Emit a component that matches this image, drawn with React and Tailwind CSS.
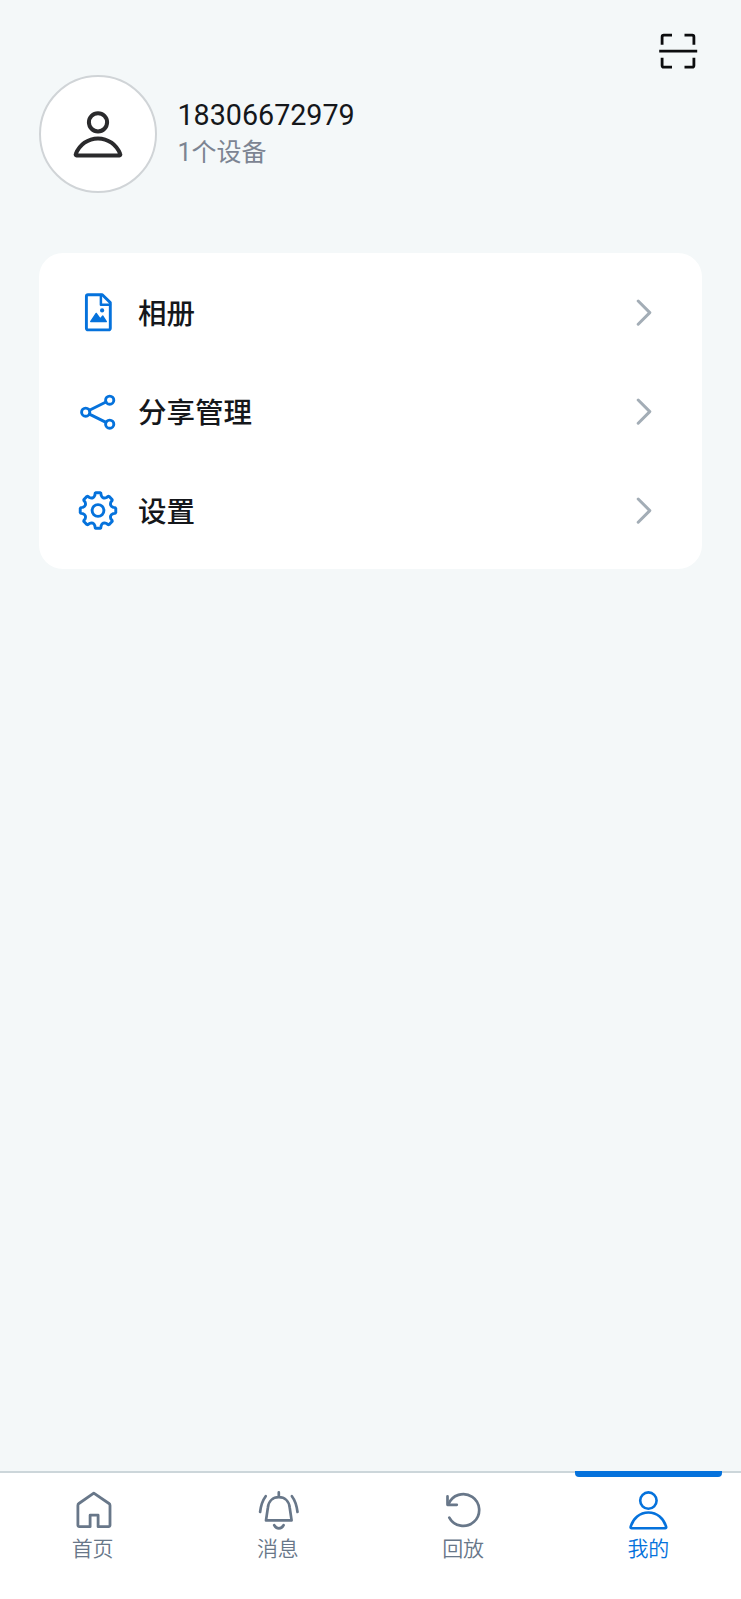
import React, { useState } from "react";

const point = (deg, r) => {
  const a = (deg * Math.PI) / 180;
  return `${(20 + r * Math.cos(a)).toFixed(2)} ${(19.5 + r * Math.sin(a)).toFixed(2)}`;
};

// eight rounded teeth, one every 45 degrees
const gearPath =
  [0, 45, 90, 135, 180, 225, 270, 315]
    .map((a, i) => `${i ? "L" : "M"}${point(a - 7, 17.9)} L${point(a + 7, 17.9)} Q${point(a + 10.5, 17.8)} ${point(a + 11.5, 15.6)} Q${point(a + 22.5, 12.2)} ${point(a + 33.5, 15.6)} Q${point(a + 34.5, 17.8)} ${point(a + 38, 17.9)}`)
    .join(" ") + "Z";

const Icon = ({ children, width = 2.9, className = "" }) => (
  <svg
    viewBox="0 0 40 40"
    className={`size-10 shrink-0 overflow-visible ${className}`}
    fill="none"
    stroke="currentColor"
    strokeWidth={width}
    strokeLinecap="round"
    strokeLinejoin="round"
  >
    {children}
  </svg>
);

const AlbumIcon = () => (
  <Icon>
    <path d="M10.2 1.8H24.3L32.3 9.6V35.3a1.6 1.6 0 0 1-1.6 1.6H10a1.6 1.6 0 0 1-1.6-1.6V3.4a1.6 1.6 0 0 1 1.6-1.6Z" />
    <path d="M22.9 2V11.7H32" strokeWidth="2.5" />
    <circle cx="24.1" cy="17.4" r="2.1" fill="currentColor" stroke="none" />
    <path d="M12.7 28.6L18.2 20.4L22.2 26L24.8 23L28.3 28.6Z" fill="currentColor" strokeWidth="1.4" />
  </Icon>
);

const ShareIcon = () => (
  <Icon>
    <circle cx="7.7" cy="20.2" r="4.1" />
    <circle cx="31.7" cy="8.2" r="4.1" />
    <circle cx="31.7" cy="32.2" r="4.1" />
    <path d="M11.4 18.3L28 10M11.4 22.1L28 30.4" />
  </Icon>
);

const GearIcon = () => (
  <Icon>
    <path d={gearPath} />
    <circle cx="20" cy="19.5" r="5.9" />
  </Icon>
);

const HomeIcon = () => (
  <Icon width={2.8}>
    <path d="M20.8 3.1L36 13.5Q37 14.2 37 15.4V35.3a1.4 1.4 0 0 1-1.4 1.4H25.1V25.2H17.1V36.7H6.3a1.4 1.4 0 0 1-1.4-1.4V15.4Q4.9 14.2 5.9 13.5Z" />
  </Icon>
);

const BellIcon = () => (
  <Icon width={2.7}>
    <path d="M20.8 2.4V7M8 30.4L9.9 17.5C10.6 11 15 7.2 20.8 7.2S31 11 31.7 17.5L33.6 30.4Z" />
    <path d="M16.2 35.2Q17.8 38.4 20.9 38.4T25.6 35.2" />
    <path d="M7.7 6.2Q3.3 12 2.1 22M33.9 6.2Q38.3 12 39.5 22" />
  </Icon>
);

const ReplayIcon = () => (
  <Icon width={2.7}>
    <path d="M6.3 27.6A15.9 15.9 0 1 0 5.4 14.4" />
    <path d="M4.5 6.4V14.8H13.8" />
  </Icon>
);

const PersonIcon = () => (
  <Icon width={2.6}>
    <circle cx="20.4" cy="10.6" r="8.2" />
    <path d="M3.6 38.3H37.2a1 1 0 0 0 1-1.2C35.8 28.5 29 22.5 20.4 22.5S5 28.5 2.6 37.1a1 1 0 0 0 1 1.2Z" />
  </Icon>
);

const menuItems = [
  { label: "相册", icon: AlbumIcon },
  { label: "分享管理", icon: ShareIcon },
  { label: "设置", icon: GearIcon },
];

const tabs = [
  { label: "首页", icon: HomeIcon },
  { label: "消息", icon: BellIcon },
  { label: "回放", icon: ReplayIcon },
  { label: "我的", icon: PersonIcon },
];

const Profile = () => (
  <section className="flex h-[119px] items-start gap-5 px-[39px]">
    <div className="flex size-[118.4px] items-center justify-center rounded-full border-2 border-[#d0d4d7] bg-white text-[#2a2a2c]">
      <svg viewBox="0 0 50 48" className="h-12 w-[50px]" fill="none" stroke="currentColor" strokeWidth="4" strokeLinejoin="round">
        <circle cx="25" cy="12.3" r="9.1" />
        <path d="M3.6 45.4H46.4a.9.9 0 0 0 .8-1.4C43.5 34.7 35 28.4 25 28.4S6.5 34.7 2.8 44a.9.9 0 0 0 .8 1.4Z" />
      </svg>
    </div>
    <div className="flex flex-col pt-[21px]">
      <span className="text-[28.7px] leading-[38px] text-[#15171b]">18306672979</span>
      <span className="mt-0.5 text-[25px] leading-[34px] text-[#7c8492]">1个设备</span>
    </div>
  </section>
);

const Menu = () => (
  <section className="mx-[39px] mt-[59px] rounded-3xl bg-white pt-[11px] pb-[9px]">
    {menuItems.map(({ label, icon: ItemIcon }) => (
      <button key={label} className="flex h-[98.7px] w-full items-center pr-[49px] pl-[39px] text-[#0572dc]">
        <ItemIcon />
        <span className="ml-5 flex-1 pt-1 text-left text-[28.5px] leading-10 font-medium text-[#15171b]">{label}</span>
        <svg viewBox="0 0 18 28" className="h-7 w-[18px] text-[#a3adb6]" fill="none" stroke="currentColor" strokeWidth="3" strokeLinecap="round" strokeLinejoin="round">
          <path d="M3.2 2L14.8 13.6L3.2 25.2" />
        </svg>
      </button>
    ))}
  </section>
);

const App = () => {
  const [active, setActive] = useState("我的");

  return (
    <div className="flex h-[1599px] w-[741px] flex-col bg-[#f4f8f9] font-[Roboto,'Noto_Sans_CJK_SC',sans-serif]">
      <header className="flex h-[75px] shrink-0 justify-end pt-[33px] pr-[43px]">
        <svg viewBox="0 0 40 36" className="h-9 w-10 text-[#0c0d0f]" fill="none" stroke="currentColor" strokeWidth="2.8">
          <path d="M4.1 11.8V3.9Q4.1 2.2 5.8 2.2H14M26.5 2.2H34.2Q35.9 2.2 35.9 3.9V11.8M35.9 24.8V32.4Q35.9 34.1 34.2 34.1H26.5M14 34.1H5.8Q4.1 34.1 4.1 32.4V24.8" />
          <path d="M1.2 18.2H39.2" />
        </svg>
      </header>
      <Profile />
      <Menu />
      <nav className="mt-auto flex h-32 border-t-2 border-[#ccd6da] bg-white">
        {tabs.map(({ label, icon: TabIcon }) => (
          <button
            key={label}
            onClick={() => setActive(label)}
            className={`relative flex flex-1 flex-col items-center pt-[17px] ${active === label ? "text-[#0572dc]" : "text-[#687789]"}`}
          >
            {active === label && <span className="absolute -top-0.5 left-[19px] h-1.5 w-[147px] rounded-b bg-[#0572dc]" />}
            <TabIcon />
            <span className="mt-1 text-[21px] leading-[30px] font-[350]">{label}</span>
          </button>
        ))}
      </nav>
    </div>
  );
};

export default App;
